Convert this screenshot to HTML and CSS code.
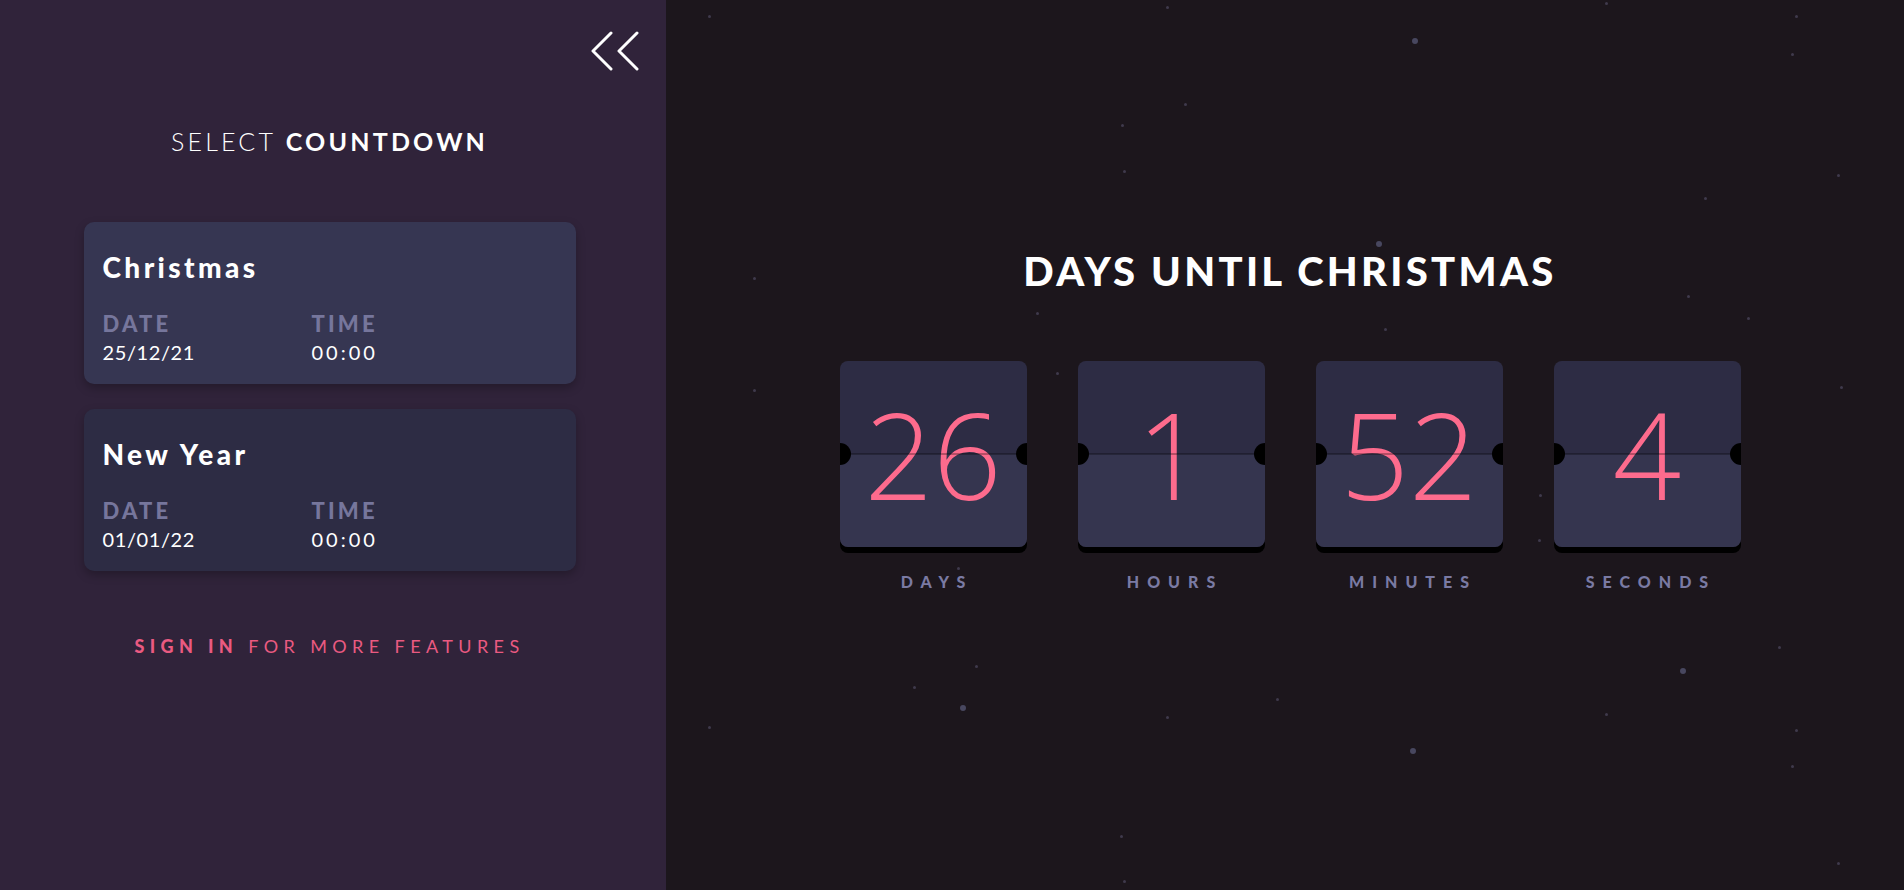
FILE: index.html
```html
<!DOCTYPE html>
<html lang="en">
<head>
<meta charset="utf-8">
<title>Countdown</title>
<link rel="stylesheet" href="styles.css">
</head>
<body>
<div class="app">
  <aside class="sidebar">
    <div class="toggle-row">
      <svg class="toggle" width="48" height="40" viewBox="0 0 48 40" fill="none" stroke="#ffffff" stroke-width="3" stroke-linecap="round" stroke-linejoin="round">
        <path d="M20 2 L2 20 L20 38"/>
        <path d="M46 2 L28 20 L46 38"/>
      </svg>
    </div>
    <h2 class="select-title"><span class="thin">SELECT</span> <span class="bold">COUNTDOWN</span></h2>
    <div class="event-list">
      <div class="event-card active">
        <div class="event-name">Christmas</div>
        <div class="event-meta">
          <div class="meta-col"><div class="meta-label">DATE</div><div class="meta-value">25/12/21</div></div>
          <div class="meta-col"><div class="meta-label">TIME</div><div class="meta-value time">00:00</div></div>
        </div>
      </div>
      <div class="event-card">
        <div class="event-name">New Year</div>
        <div class="event-meta">
          <div class="meta-col"><div class="meta-label">DATE</div><div class="meta-value">01/01/22</div></div>
          <div class="meta-col"><div class="meta-label">TIME</div><div class="meta-value time">00:00</div></div>
        </div>
      </div>
    </div>
    <p class="signin"><span class="signin-bold">SIGN IN</span> FOR MORE FEATURES</p>
  </aside>
  <main class="main">
    <div class="stars">
      <i class="star" style="left:42px;top:15px"></i>
      <i class="star" style="left:500px;top:6px"></i>
      <i class="star big" style="left:746px;top:38px"></i>
      <i class="star" style="left:939px;top:2px"></i>
      <i class="star" style="left:1129px;top:15px"></i>
      <i class="star" style="left:1125px;top:53px"></i>
      <i class="star" style="left:518px;top:103px"></i>
      <i class="star" style="left:455px;top:124px"></i>
      <i class="star" style="left:457px;top:170px"></i>
      <i class="star" style="left:1038px;top:197px"></i>
      <i class="star" style="left:1171px;top:174px"></i>
      <i class="star big" style="left:710px;top:241px"></i>
      <i class="star" style="left:87px;top:277px"></i>
      <i class="star" style="left:836px;top:285px"></i>
      <i class="star" style="left:1021px;top:295px"></i>
      <i class="star" style="left:370px;top:312px"></i>
      <i class="star" style="left:718px;top:328px"></i>
      <i class="star" style="left:1081px;top:317px"></i>
      <i class="star" style="left:87px;top:389px"></i>
      <i class="star" style="left:1174px;top:386px"></i>
      <i class="star" style="left:390px;top:372px"></i>
      <i class="star" style="left:873px;top:494px"></i>
      <i class="star" style="left:872px;top:539px"></i>
      <i class="star" style="left:291px;top:567px"></i>
      <i class="star" style="left:309px;top:665px"></i>
      <i class="star" style="left:247px;top:686px"></i>
      <i class="star big" style="left:1014px;top:668px"></i>
      <i class="star" style="left:1112px;top:646px"></i>
      <i class="star big" style="left:294px;top:705px"></i>
      <i class="star" style="left:610px;top:698px"></i>
      <i class="star" style="left:939px;top:713px"></i>
      <i class="star" style="left:500px;top:716px"></i>
      <i class="star" style="left:42px;top:726px"></i>
      <i class="star big" style="left:744px;top:748px"></i>
      <i class="star" style="left:1129px;top:729px"></i>
      <i class="star" style="left:1125px;top:765px"></i>
      <i class="star" style="left:454px;top:835px"></i>
      <i class="star" style="left:457px;top:880px"></i>
      <i class="star" style="left:1171px;top:862px"></i>
    </div>
    <div class="countdown">
      <h1 class="countdown-title">DAYS UNTIL CHRISTMAS</h1>
      <div class="flips">
        <div class="unit">
          <div class="flip"><span class="num">26</span></div>
          <div class="unit-label">DAYS</div>
        </div>
        <div class="unit">
          <div class="flip"><span class="num">1</span></div>
          <div class="unit-label">HOURS</div>
        </div>
        <div class="unit">
          <div class="flip"><span class="num">52</span></div>
          <div class="unit-label">MINUTES</div>
        </div>
        <div class="unit">
          <div class="flip"><span class="num">4</span></div>
          <div class="unit-label">SECONDS</div>
        </div>
      </div>
    </div>
  </main>
</div>
</body>
</html>
```
FILE: styles.css
```css
html, body {
  margin: 0;
  padding: 0;
  height: 100%;
}
body {
  font-family: Lato, "Open Sans", sans-serif;
  background: #1c161c;
  color: #ffffff;
}
.app {
  display: flex;
  height: 890px;
  overflow: hidden;
}
.sidebar {
  width: 666px;
  flex: none;
  background: #30233a;
  display: flex;
  flex-direction: column;
  align-items: center;
  padding-right: 7px;
  box-sizing: border-box;
}
.toggle-row {
  align-self: stretch;
  display: flex;
  justify-content: flex-end;
  padding: 31px 20px 0 0;
}
.toggle {
  display: block;
}
.select-title {
  margin: 55px 0 0;
  font-size: 25px;
  line-height: 30px;
  letter-spacing: 3.2px;
  font-weight: 400;
}
.select-title .thin {
  font-weight: 300;
}
.select-title .bold {
  font-weight: 700;
}
.event-list {
  margin-top: 66px;
  width: 492px;
  display: flex;
  flex-direction: column;
  gap: 25px;
}
.event-card {
  background: #2d2c44;
  border-radius: 10px;
  padding: 28px 19px 20px;
  box-shadow: 0 4px 10px rgba(0, 0, 0, 0.25);
  height: 162px;
  box-sizing: border-box;
}
.event-card.active {
  background: #363652;
}
.event-name {
  font-size: 28px;
  line-height: 34px;
  font-weight: 900;
  letter-spacing: 3.4px;
}
.event-meta {
  display: flex;
  margin-top: 27px;
}
.meta-col {
  width: 209px;
}
.meta-label {
  font-size: 22px;
  line-height: 26px;
  font-weight: 900;
  color: #76769c;
  letter-spacing: 3.2px;
}
.meta-value {
  margin-top: 3px;
  font-size: 20px;
  line-height: 24px;
  font-weight: 400;
  letter-spacing: 0.6px;
}
.meta-value.time {
  letter-spacing: 3px;
}
.signin {
  margin: 64px 0 0;
  font-size: 18px;
  line-height: 22px;
  letter-spacing: 5.4px;
  color: #ea5a81;
}
.signin-bold {
  font-weight: 900;
}
.main {
  flex: 1;
  position: relative;
  padding-left: 10px;
}
.stars {
  position: absolute;
  inset: 0;
}
.star {
  position: absolute;
  width: 3px;
  height: 3px;
  border-radius: 50%;
  background: #3f3a4c;
}
.star.big {
  width: 6px;
  height: 6px;
  background: #48475f;
}
.countdown {
  position: relative;
  display: flex;
  flex-direction: column;
  align-items: center;
  padding-top: 247px;
}
.countdown-title {
  margin: 0;
  font-size: 40px;
  line-height: 48px;
  font-weight: 900;
  letter-spacing: 3.3px;
}
.flips {
  margin-top: 66px;
  display: flex;
  gap: 51px;
}
.unit {
  display: flex;
  flex-direction: column;
  align-items: center;
}
.flip {
  position: relative;
  width: 187px;
  height: 186px;
  border-radius: 8px;
  overflow: hidden;
  background: linear-gradient(#2d2c44 0 50%, #35354f 50% 100%);
  box-shadow: 0 6px 0 #000;
  display: flex;
  align-items: center;
  justify-content: center;
}
.flip::before {
  content: "";
  position: absolute;
  left: 0;
  right: 0;
  top: 92px;
  height: 2px;
  background: rgba(0, 0, 0, 0.28);
  z-index: 1;
}
.flip::after {
  content: "";
  position: absolute;
  top: 82px;
  left: -11px;
  width: 22px;
  height: 22px;
  border-radius: 50%;
  background: #000;
  box-shadow: 187px 0 0 #000;
  z-index: 2;
}
.num {
  font-family: "Open Sans", Lato, sans-serif;
  font-size: 120px;
  font-weight: 300;
  line-height: 1;
  color: #fd6b8d;
}
.unit-label {
  margin-top: 25px;
  font-size: 16px;
  line-height: 20px;
  font-weight: 900;
  letter-spacing: 8px;
  color: #7a7aa3;
  padding-left: 8px;
}
```
